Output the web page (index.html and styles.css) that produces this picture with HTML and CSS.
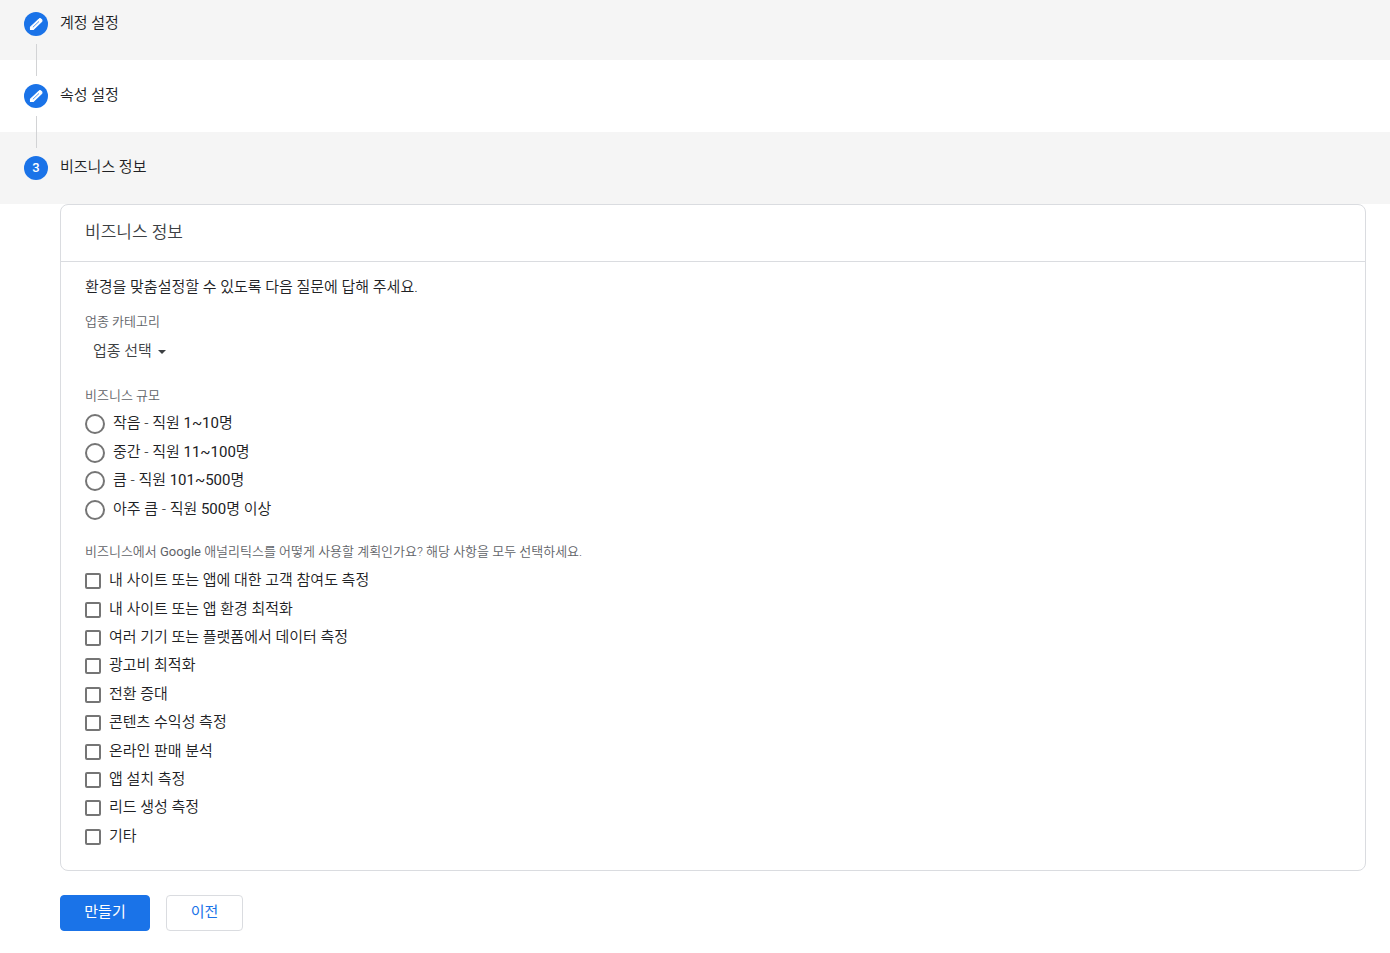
FILE: index.html
```html
<!DOCTYPE html>
<html lang="ko">
<head>
<meta charset="utf-8">
<meta name="viewport" content="width=device-width, initial-scale=1">
<title>비즈니스 정보</title>
<link rel="stylesheet" href="styles.css">
</head>
<body>
<main>
  <ol class="steps">
    <li class="step step-first">
      <span class="badge"><svg class="pencil" viewBox="0 0 24 24" aria-hidden="true"><path d="M4.6 19.4v-3.2L16 5.4a1.8 1.8 0 0 1 2.6 0l.8.8a1.8 1.8 0 0 1 0 2.6L8.2 19.4z" fill="#fff" stroke="#fff" stroke-width="1.4" stroke-linejoin="round"/><path d="M7.8 16.4 16 8.6" stroke="#1a73e8" stroke-width="1"/></svg></span>
      <span class="step-name">계정 설정</span>
    </li>
    <li class="step">
      <span class="badge"><svg class="pencil" viewBox="0 0 24 24" aria-hidden="true"><path d="M4.6 19.4v-3.2L16 5.4a1.8 1.8 0 0 1 2.6 0l.8.8a1.8 1.8 0 0 1 0 2.6L8.2 19.4z" fill="#fff" stroke="#fff" stroke-width="1.4" stroke-linejoin="round"/><path d="M7.8 16.4 16 8.6" stroke="#1a73e8" stroke-width="1"/></svg></span>
      <span class="step-name">속성 설정</span>
    </li>
    <li class="step">
      <span class="badge">3</span>
      <span class="step-name">비즈니스 정보</span>
    </li>
  </ol>
  <form class="form">
    <section class="card">
      <h2 class="card-title">비즈니스 정보</h2>
      <div class="card-body">
        <p class="intro">환경을 맞춤설정할 수 있도록 다음 질문에 답해 주세요.</p>
        <div class="field">
          <label class="caption" for="industry">업종 카테고리</label>
          <div class="picker">
            <select id="industry" class="picker-select"><option>업종 선택</option></select>
            <svg class="picker-arrow" viewBox="0 0 8 4" aria-hidden="true"><path d="M0 0h8L4 4z" fill="#3c4043"/></svg>
          </div>
        </div>
        <fieldset class="group">
          <legend class="caption">비즈니스 규모</legend>
          <div class="options options-size">
            <label class="option"><input class="radio" type="radio" name="size"><span class="option-text">작음 - 직원 <span class="latin">1~10</span>명</span></label>
            <label class="option"><input class="radio" type="radio" name="size"><span class="option-text">중간 - 직원 <span class="latin">11~100</span>명</span></label>
            <label class="option"><input class="radio" type="radio" name="size"><span class="option-text">큼 - 직원 <span class="latin">101~500</span>명</span></label>
            <label class="option"><input class="radio" type="radio" name="size"><span class="option-text">아주 큼 - 직원 <span class="latin">500</span>명 이상</span></label>
          </div>
        </fieldset>
        <fieldset class="group">
          <legend class="caption">비즈니스에서 <span class="latin">Google</span> 애널리틱스를 어떻게 사용할 계획인가요? 해당 사항을 모두 선택하세요.</legend>
          <div class="options options-usage">
            <label class="option"><input class="check" type="checkbox"><span class="option-text">내 사이트 또는 앱에 대한 고객 참여도 측정</span></label>
            <label class="option"><input class="check" type="checkbox"><span class="option-text">내 사이트 또는 앱 환경 최적화</span></label>
            <label class="option"><input class="check" type="checkbox"><span class="option-text">여러 기기 또는 플랫폼에서 데이터 측정</span></label>
            <label class="option"><input class="check" type="checkbox"><span class="option-text">광고비 최적화</span></label>
            <label class="option"><input class="check" type="checkbox"><span class="option-text">전환 증대</span></label>
            <label class="option"><input class="check" type="checkbox"><span class="option-text">콘텐츠 수익성 측정</span></label>
            <label class="option"><input class="check" type="checkbox"><span class="option-text">온라인 판매 분석</span></label>
            <label class="option"><input class="check" type="checkbox"><span class="option-text">앱 설치 측정</span></label>
            <label class="option"><input class="check" type="checkbox"><span class="option-text">리드 생성 측정</span></label>
            <label class="option"><input class="check" type="checkbox"><span class="option-text">기타</span></label>
          </div>
        </fieldset>
      </div>
    </section>
    <div class="actions">
      <button class="button button-primary" type="submit">만들기</button>
      <button class="button" type="button">이전</button>
    </div>
  </form>
</main>
</body>
</html>
```

FILE: styles.css
```css
* { box-sizing: border-box; }

body {
  margin: 0;
  background: #fff;
  color: #202124;
  font: 350 15px/20px Roboto, "Noto Sans CJK KR", sans-serif;
}

/* Roboto needs a heavier weight to sit evenly beside the Hangul */
.latin { font-weight: 400; }

.steps { list-style: none; margin: 0; padding: 0; }

.step {
  position: relative;
  display: flex;
  align-items: center;
  gap: 12px;
  min-height: 72px;
  padding: 0 24px;
}
.step-first { min-height: 60px; padding-bottom: 12px; }
.step:nth-child(odd) { background: #f5f5f5; }

/* Connector that runs down into the next step */
.step:not(:last-child)::after {
  content: "";
  position: absolute;
  z-index: 1;
  left: 36px;
  bottom: -16px;
  width: 1px;
  height: 32px;
  background: #d2d3d5;
}

.badge {
  display: flex;
  align-items: center;
  justify-content: center;
  width: 24px;
  height: 24px;
  border-radius: 50%;
  background: #1a73e8;
  color: #fff;
  font-size: 13px;
  font-weight: 500;
}
.pencil { width: 18px; height: 18px; }
.step-name, .option-text { padding-bottom: 2px; }

.form { padding: 0 24px 22px 60px; }

.card { border: 1px solid #dadce0; border-radius: 8px; background: #fff; }
.card-title {
  margin: 0;
  padding: 17px 24px 19px;
  border-bottom: 1px solid #dadce0;
  color: #3c4043;
  font-size: 17px;
  font-weight: 350;
  line-height: 20px;
}
.card-body { padding: 15px 24px 20px; }
.intro { margin: 0 0 15px; }

.caption { display: block; padding: 0; color: #5f6368; font-size: 13px; }

.picker { position: relative; width: max-content; margin-top: 4px; }
.picker-select {
  appearance: none;
  display: block;
  height: 32px;
  padding: 0 21px 2px 8px;
  border: 0;
  border-radius: 4px;
  background: transparent;
  color: #3c4043;
  font: inherit;
}
.picker-arrow { position: absolute; right: 7px; top: 14px; width: 8px; height: 4px; pointer-events: none; }

.group { min-width: 0; margin: 18px 0 0; padding: 0; border: 0; }
.options { display: grid; margin-top: 4px; }
.options-size { min-height: 114px; }
.options-usage { min-height: 284px; }
.options-usage { margin-top: 5px; }
.card-body { padding-bottom: 19px; }
.option { display: flex; align-items: center; gap: 8px; width: max-content; }

.radio, .check {
  appearance: none;
  flex: none;
  margin: 0;
  border: 2px solid #757575;
  background: #fff;
}
.radio { width: 20px; height: 20px; border-radius: 50%; }
.check { width: 16px; height: 16px; border-radius: 2px; }
.radio:checked { background: radial-gradient(#1a73e8 50%, #fff 55%); border-color: #1a73e8; }
.check:checked { background: #1a73e8; border-color: #1a73e8; }

.actions { display: flex; gap: 16px; margin-top: 24px; }
.button {
  height: 36px;
  min-width: 77px;
  padding: 0 23px 2px;
  border: 1px solid #dadce0;
  border-radius: 4px;
  background: #fff;
  color: #1a73e8;
  font: inherit;
  font-weight: 400;
}
.button-primary { min-width: 90px; border-color: #1a73e8; background: #1a73e8; color: #fff; }
```
